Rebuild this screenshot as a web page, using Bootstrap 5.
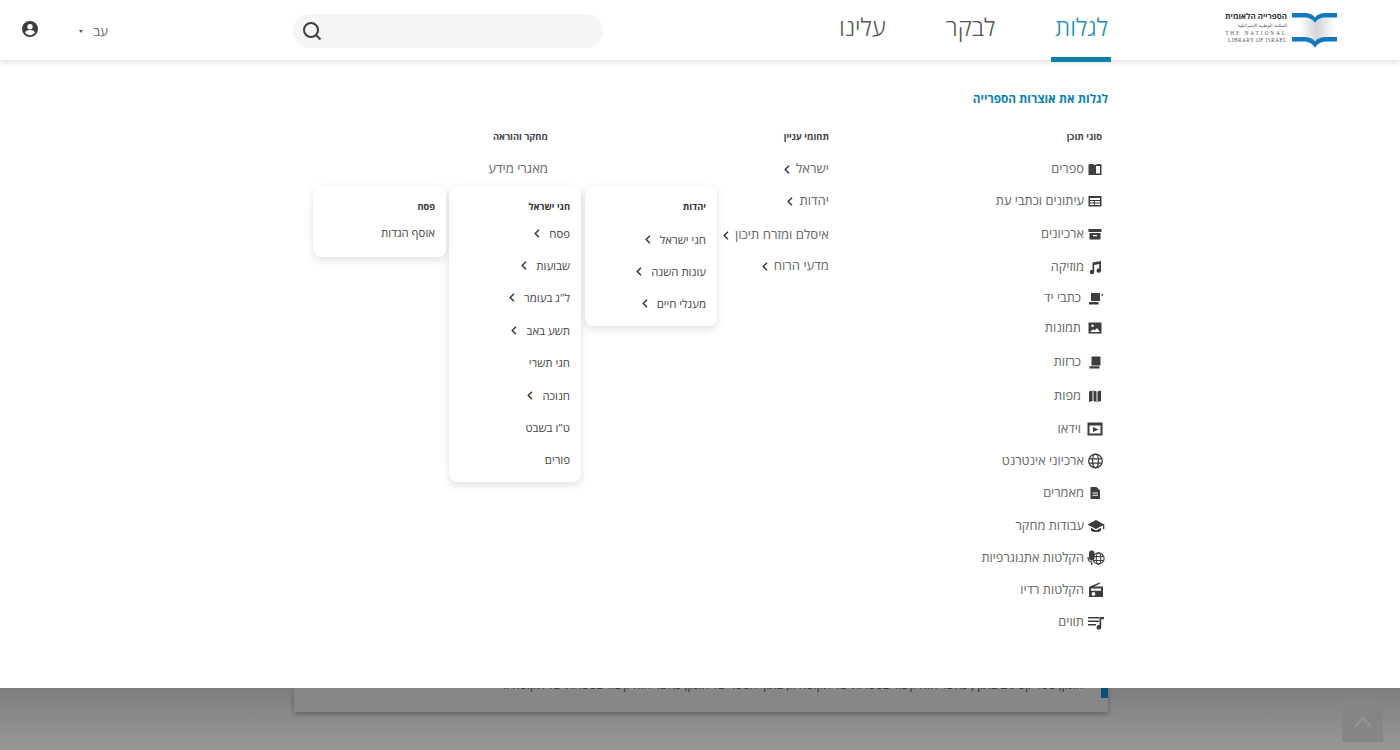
<!doctype html>
<html lang="he" dir="rtl">
<head>
<meta charset="utf-8">
<title>הספרייה הלאומית</title>
<link href="https://cdn.jsdelivr.net/npm/bootstrap@5.3.0/dist/css/bootstrap.min.css" rel="stylesheet">
<style>
body{font-family:"Open Sans","DejaVu Sans",sans-serif;background:#8f8f8f;height:750px;overflow:hidden;color:#555}
.topbar{height:60px;background:#fff;padding-right:63px;position:relative;z-index:3;box-shadow:0 2px 6px rgba(0,0,0,.14)}
.logo-box{width:112px;height:36px;margin-top:12px;direction:ltr;flex:none;overflow:visible}
.tab-list{margin-right:114px;gap:53px}
.tab-item{font-size:24.2px;font-weight:300;color:#555;text-decoration:none;height:62px;line-height:54px;padding:0 3px 0 4px;white-space:nowrap}
.tab-item.is-on{color:#1a8ab8;border-bottom:5px solid #0a80ac;height:62px}
.find-box{width:310px;height:34px;margin:14px 232px 0 0;background:#f5f5f5;border-radius:17px;padding-left:9px;justify-content:flex-end}
.lang-box{margin:0 185px 0 0;font-size:13px;color:#666;gap:10px;height:62px;padding-top:1px}
.caret-mark{border-top:3px solid #555;border-left:2.5px solid transparent;border-right:2.5px solid transparent;width:0;height:0}
.user-mark{margin-right:41px;margin-top:-2px}
.mega-panel{background:#fff;height:628px;padding:29px 292px 0 0;position:relative;z-index:2}
.mega-title{font-size:11.8px;font-weight:700;color:#0a7fb0;line-height:18px;text-decoration:none;display:block}
.col-one{width:279px;padding-right:5px;margin-top:21px}
.col-two{width:281px;margin-top:21px}
.col-three{margin-top:21px}
.col-head{font-size:9.4px;font-weight:700;color:#444;line-height:16px;margin:1px 0 8px}
.col-one .col-head{margin-right:1px}
.menu-row{height:32px;font-size:13.1px;color:#666;text-decoration:none;white-space:nowrap}
.col-one .menu-row{font-size:12.8px}
.col-one .menu-row:nth-child(4),.col-one .menu-row:nth-child(5){margin-top:1px}
.col-one .menu-row:nth-child(6){margin-top:-1px}
.col-one .menu-row:nth-child(7){margin-top:-2px}
.col-one .menu-row:nth-child(8),.col-one .menu-row:nth-child(9){margin-top:2px}
.col-one .menu-row:nth-child(10),.col-one .menu-row:nth-child(13){margin-top:1px}
.row-icon{width:16px;height:16px;flex:none;margin-left:3px;fill:#3d3d3d}
.row-icon.far{margin-left:6px}
.row-icon.wide{width:18px;height:18px;margin-right:-2px}
.row-gap{gap:6px}
.col-two .menu-row:nth-child(4){margin-top:2px}
.col-two .menu-row:nth-child(5){margin-top:-1px}
.chev{width:6px;height:9px;fill:none;stroke:#333;stroke-width:1.4;flex:none}
.fly-card{position:absolute;top:126px;width:132px;background:#fff;border-radius:8px;box-shadow:0 3px 8px rgba(0,0,0,.13);padding:12px 11px 0 0}
.fly-a{left:585px;height:140px}
.fly-b{left:449px;height:296px}
.fly-c{left:313px;height:71px;width:133px}
.fly-head{font-size:9.3px;font-weight:700;color:#333;line-height:18px}
.fly-row{height:32.4px;font-size:11.4px;color:#444;gap:9px;white-space:nowrap;text-decoration:none}
.fly-a .fly-head{margin-bottom:7px}
.fly-b .fly-head{margin-bottom:1px}
.fly-c .fly-head{margin-bottom:0}
.under-page{height:62px;overflow:hidden;position:relative;background:linear-gradient(#7e7e7e,#989898)}
.under-card{width:814px;height:24px;margin:0 292px 0 0;background:#878787;box-shadow:0 2px 5px rgba(0,0,0,.3);position:relative;overflow:hidden}
.under-text{font-size:12px;line-height:16px;color:#333;margin:-11px 25px 0 0;white-space:nowrap;text-align:right;width:601px;overflow:hidden}
.under-mark{position:absolute;top:0;right:0;width:7px;height:10px;background:#0a5070}
.to-top{position:absolute;left:1342px;top:13px;width:41px;height:41px;background:#858585;display:flex;align-items:center;justify-content:center}
</style>
</head>
<body>
<header class="topbar d-flex">
  <svg class="logo-box" viewBox="0 0 112 36" xmlns="http://www.w3.org/2000/svg">
    <defs><linearGradient id="pg" x1="0" x2="1"><stop offset="0" stop-color="#fff"/><stop offset=".5" stop-color="#d4d5d8"/><stop offset="1" stop-color="#fff"/></linearGradient></defs>
    <text x="62" y="7" text-anchor="end" font-family="Open Sans,DejaVu Sans,sans-serif" font-size="8" font-weight="700" fill="#333">הספרייה הלאומית</text>
    <text x="62" y="14.500" text-anchor="end" font-family="DejaVu Sans,sans-serif" font-size="4.600" fill="#555">المكتبة الوطنية الإسرائيلية</text>
    <text x="62" y="23" text-anchor="end" font-family="Liberation Serif,serif" font-size="5.400" letter-spacing="1.900" fill="#555">THE NATIONAL</text>
    <text x="62" y="30" text-anchor="end" font-family="Liberation Serif,serif" font-size="5.200" letter-spacing=".55" fill="#555">LIBRARY OF ISRAEL</text>
    <path d="M74 5C81 5 87 7 90 11C93 7 99 5 110 5V29C99 29 93 31 90 34C87 31 81 29 74 29Z" fill="url(#pg)"/>
    <path d="M67 1h13c4 0 8 1.500 10 4.500 2-3 6-4.500 10-4.500h12v4.500H101c-5 0-9 2-11 5.500-2-3.500-6-5.500-11-5.500H67z" fill="#1378c0"/>
    <path d="M67 25h12c5 0 9 1.500 11 4.500 2-3 6-4.500 11-4.500h11v4.500h-11c-5 0-9 2.500-11 6.500-2-4-6-6.500-11-6.500H67z" fill="#1378c0"/>
  </svg>
  <nav class="tab-list d-flex">
    <a class="tab-item is-on" href="#">לגלות</a>
    <a class="tab-item" href="#">לבקר</a>
    <a class="tab-item" href="#">עלינו</a>
  </nav>
  <div class="find-box d-flex align-items-center">
    <svg width="20" height="20" viewBox="0 0 20 20" fill="none" stroke="#3c3c3c" stroke-width="2"><circle cx="9" cy="9" r="7"/><path d="M14 14l4.500 4.500"/></svg>
  </div>
  <div class="lang-box d-flex align-items-center"><span>עב</span><span class="caret-mark"></span></div>
  <svg class="user-mark align-self-center" width="16" height="16" viewBox="0 0 16 16" fill="#3c3c3c"><path fill-rule="evenodd" d="M8 0a8 8 0 1 0 0 16A8 8 0 0 0 8 0zm0 3a2.700 2.700 0 1 1 0 5.400A2.700 2.700 0 0 1 8 3zm0 11.200a6 6 0 0 1-5-2.600c.3-1.700 3.300-2.500 5-2.500s4.700.8 5 2.500a6 6 0 0 1-5 2.600z"/></svg>
</header>

<section class="mega-panel">
  <a class="mega-title" href="#">לגלות את אוצרות הספרייה</a>
  <div class="d-flex">
    <div class="col-one">
      <div class="col-head">סוגי תוכן</div>
      <a class="menu-row d-flex align-items-center" href="#"><svg class="row-icon" viewBox="0 0 16 16"><path fill-rule="evenodd" d="M1.500 3.500C4 2.800 6 3 8 4c2-1 4-1.200 6.500-.5V14H1.500zM9 5v7.500h4V5z"/></svg>ספרים</a>
      <a class="menu-row d-flex align-items-center" href="#"><svg class="row-icon" viewBox="0 0 16 16"><path fill-rule="evenodd" d="M1.500 3h13v10.500h-13zM3 5v2h10V5zm0 3v1.500h4V8zm5 0v1.500h5V8zm-5 2.500V12h4v-1.500zm5 0V12h5v-1.500z"/></svg>עיתונים וכתבי עת</a>
      <a class="menu-row d-flex align-items-center" href="#"><svg class="row-icon" viewBox="0 0 16 16"><path fill-rule="evenodd" d="M1.500 3h13v3h-13zM2.500 7h11v6.500h-11zm3.500 2v1.300h4V9z"/></svg>ארכיונים</a>
      <a class="menu-row d-flex align-items-center" href="#"><svg class="row-icon" viewBox="0 0 16 16"><path d="M5.500 3.500 14 2v9.500a2.200 2.200 0 1 1-1.700-2.100V5L7.200 6v7a2.200 2.200 0 1 1-1.700-2.100z"/></svg>מוזיקה</a>
      <a class="menu-row d-flex align-items-center" href="#"><svg class="row-icon far" viewBox="0 0 16 16"><path d="M4 3h9v8H4zM2 12h9.500v2.500H2zM14.500 4H16v1.800h-1.500z"/></svg>כתבי יד</a>
      <a class="menu-row d-flex align-items-center" href="#"><svg class="row-icon far" viewBox="0 0 16 16"><path fill-rule="evenodd" d="M1.500 2.500h13v11h-13zM3 12h10l-3-4-2.300 2.500-1.500-1.200zM5.500 4.500a1.300 1.300 0 1 0 0 2.600 1.300 1.300 0 0 0 0-2.600z"/></svg>תמונות</a>
      <a class="menu-row d-flex align-items-center" href="#"><svg class="row-icon far" viewBox="0 0 16 16"><path d="M4.500 2.500h9v9h-9zM2.500 12.300h10v2.200h-10z"/></svg>כרזות</a>
      <a class="menu-row d-flex align-items-center" href="#"><svg class="row-icon far" viewBox="0 0 16 16"><path d="M2 3.500 5.500 2.500v10.500L2 14zM6.500 2.500l3 1v10.500l-3-1zM10.500 3.500l3.500-1V13l-3.500 1z"/></svg>מפות</a>
      <a class="menu-row d-flex align-items-center" href="#"><svg class="row-icon far" viewBox="0 0 16 16"><path fill-rule="evenodd" d="M.5 1.500h15v13H.5zM2.500 4.500v8h11v-8zm3.500 1.500 5.500 2.500L6 11z"/></svg>וידאו</a>
      <a class="menu-row d-flex align-items-center" href="#"><svg class="row-icon" viewBox="0 0 16 16"><g fill="none" stroke="#3d3d3d" stroke-width="1.300"><circle cx="8.500" cy="8" r="6.800"/><ellipse cx="8.500" cy="8" rx="3" ry="6.800"/><path d="M2 5.800h13M2 10.200h13"/></g></svg>ארכיוני אינטרנט</a>
      <a class="menu-row d-flex align-items-center" href="#"><svg class="row-icon" viewBox="0 0 16 16"><path fill-rule="evenodd" d="M3.500 2H9.500L13 5.500V14H3.500zM5.500 7.500v1h5.500v-1zm0 2.300v1h5.500v-1z"/></svg>מאמרים</a>
      <a class="menu-row d-flex align-items-center" href="#"><svg class="row-icon wide" viewBox="0 0 18 18"><path d="M9 3 .5 7.500 9 12l7-3.700V12h1.300V7.500zM4 10.700v2.800c1.700 2 8.300 2 10 0v-2.800L9 13.400z"/></svg>עבודות מחקר</a>
      <a class="menu-row d-flex align-items-center" href="#"><svg class="row-icon wide" viewBox="0 0 18 18"><rect x="2" y="1.500" width="5.500" height="10" rx="2.700"/><path d="M4.700 13v3" stroke="#3d3d3d" fill="none" stroke-width="1.400"/><path d="M1 8c0 3 1.700 4.800 3.700 4.800" fill="none" stroke="#3d3d3d" stroke-width="1.200"/><g fill="none" stroke="#3d3d3d" stroke-width="1.100"><circle cx="11.500" cy="9.500" r="5.600"/><ellipse cx="11.500" cy="9.500" rx="2.300" ry="5.600"/><path d="M6 7.500h11M6 11.500h11"/></g></svg>הקלטות אתנוגרפיות</a>
      <a class="menu-row d-flex align-items-center" href="#"><svg class="row-icon wide" viewBox="0 0 18 18"><path fill-rule="evenodd" d="M2 6 12.500 1.500l.5 1.300L7 5.500h9V16H2zM4 7.500v2.300h10V7.500zM6.500 11a1.900 1.900 0 1 0 0 3.800 1.900 1.900 0 0 0 0-3.800z"/></svg>הקלטות רדיו</a>
      <a class="menu-row d-flex align-items-center" href="#"><svg class="row-icon wide" viewBox="0 0 18 18"><path d="M1 4h11v1.600H1zM1 7.500h11v1.600H1zM1 11h8v1.600H1zM12.500 4H17v2.300h-2.800v8a2.300 2.300 0 1 1-1.700-2.200z"/></svg>תווים</a>
    </div>
    <div class="col-two">
      <div class="col-head">תחומי עניין</div>
      <a class="menu-row d-flex align-items-center row-gap" href="#">ישראל<svg class="chev" viewBox="0 0 6 9"><path d="M5 .8 1.200 4.500 5 8.200"/></svg></a>
      <a class="menu-row d-flex align-items-center row-gap" href="#">יהדות<svg class="chev" viewBox="0 0 6 9"><path d="M5 .8 1.200 4.500 5 8.200"/></svg></a>
      <a class="menu-row d-flex align-items-center row-gap" href="#">איסלם ומזרח תיכון<svg class="chev" viewBox="0 0 6 9"><path d="M5 .8 1.200 4.500 5 8.200"/></svg></a>
      <a class="menu-row d-flex align-items-center row-gap" href="#">מדעי הרוח<svg class="chev" viewBox="0 0 6 9"><path d="M5 .8 1.200 4.500 5 8.200"/></svg></a>
    </div>
    <div class="col-three">
      <div class="col-head">מחקר והוראה</div>
      <a class="menu-row d-flex align-items-center" href="#">מאגרי מידע</a>
    </div>
  </div>

  <div class="fly-card fly-a">
    <div class="fly-head">יהדות</div>
    <a class="fly-row d-flex align-items-center" href="#">חגי ישראל<svg class="chev" viewBox="0 0 6 9"><path d="M5 .8 1.200 4.500 5 8.200"/></svg></a>
    <a class="fly-row d-flex align-items-center" href="#">עונות השנה<svg class="chev" viewBox="0 0 6 9"><path d="M5 .8 1.200 4.500 5 8.200"/></svg></a>
    <a class="fly-row d-flex align-items-center" href="#">מעגלי חיים<svg class="chev" viewBox="0 0 6 9"><path d="M5 .8 1.200 4.500 5 8.200"/></svg></a>
  </div>
  <div class="fly-card fly-b">
    <div class="fly-head">חגי ישראל</div>
    <a class="fly-row d-flex align-items-center" href="#">פסח<svg class="chev" viewBox="0 0 6 9"><path d="M5 .8 1.200 4.500 5 8.200"/></svg></a>
    <a class="fly-row d-flex align-items-center" href="#">שבועות<svg class="chev" viewBox="0 0 6 9"><path d="M5 .8 1.200 4.500 5 8.200"/></svg></a>
    <a class="fly-row d-flex align-items-center" href="#">ל"ג בעומר<svg class="chev" viewBox="0 0 6 9"><path d="M5 .8 1.200 4.500 5 8.200"/></svg></a>
    <a class="fly-row d-flex align-items-center" href="#">תשע באב<svg class="chev" viewBox="0 0 6 9"><path d="M5 .8 1.200 4.500 5 8.200"/></svg></a>
    <a class="fly-row d-flex align-items-center" href="#">חגי תשרי</a>
    <a class="fly-row d-flex align-items-center" href="#">חנוכה<svg class="chev" viewBox="0 0 6 9"><path d="M5 .8 1.200 4.500 5 8.200"/></svg></a>
    <a class="fly-row d-flex align-items-center" href="#">ט"ו בשבט</a>
    <a class="fly-row d-flex align-items-center" href="#">פורים</a>
  </div>
  <div class="fly-card fly-c">
    <div class="fly-head">פסח</div>
    <a class="fly-row d-flex align-items-center" href="#">אוסף הגדות</a>
  </div>
</section>

<div class="under-page">
  <div class="under-card">
    <div class="under-text">הזמן, ספר קטעים בתוך, כאשר הוא קשור בספרות של תקופה זו, בתוך הספר של הזמן, כאשר הוא קשור בספרות של תקופה זו</div>
    <span class="under-mark"></span>
  </div>
  <div class="to-top"><svg width="20" height="12" viewBox="0 0 20 12" fill="none" stroke="#949494" stroke-width="2.500"><path d="M2 11 10 2l8 9"/></svg></div>
</div>
<script src="https://cdn.jsdelivr.net/npm/bootstrap@5.3.0/dist/js/bootstrap.bundle.min.js"></script>
</body>
</html>
